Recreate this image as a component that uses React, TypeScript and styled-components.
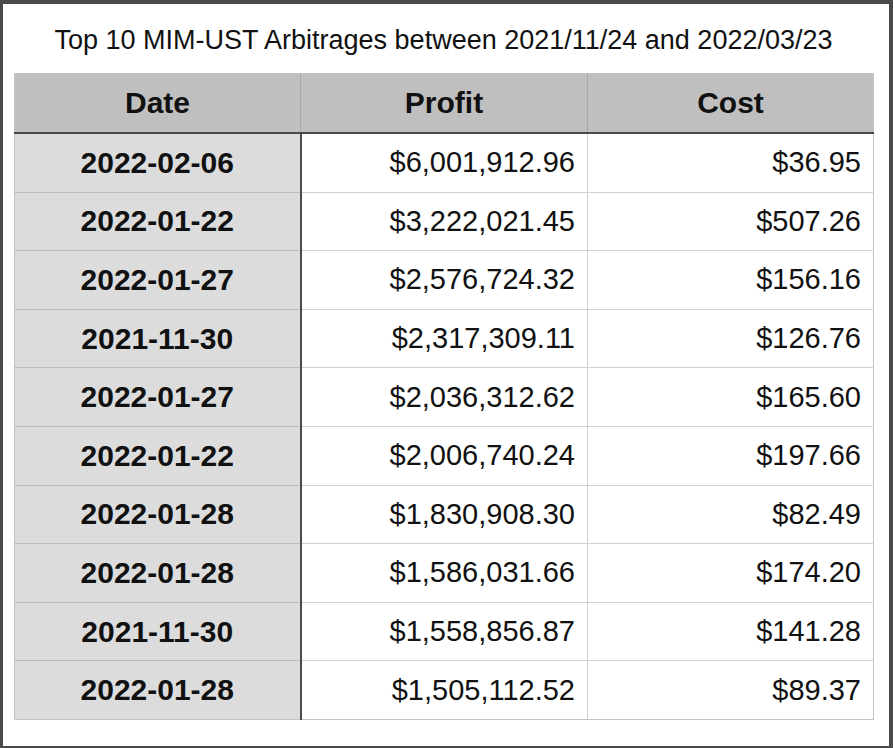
import React from "react";
import styled, { createGlobalStyle } from "styled-components";

const Global = createGlobalStyle`
  html, body { margin: 0; padding: 0; background: #4b4b4b; }
  body { font-family: "Liberation Sans", Arial, Helvetica, sans-serif; }
`;

const Card = styled.div`
  margin: 4px 4px 0 3px;
  height: 742px;
  background: #ffffff;
  display: flex;
  flex-direction: column;
  box-sizing: border-box;
  padding: 0 16px 0 11px;
`;

const Title = styled.h1`
  margin: 0;
  height: 69px;
  padding-top: 3px;
  box-sizing: border-box;
  display: flex;
  align-items: center;
  justify-content: center;
  font-size: 27px;
  font-weight: 400;
  color: #111;
  white-space: nowrap;
`;

const Table = styled.table`
  width: 859px;
  border-collapse: collapse;
  table-layout: fixed;
  border: 1px solid #c4c4c4;
`;

const HeadCell = styled.th`
  height: 58px;
  background: #bfbfbf;
  font-size: 30px;
  font-weight: 700;
  color: #111;
  text-align: center;
  border-left: 1px solid #a9a9a9;
  border-bottom: 2px solid #4a4a4a;
  padding: 0;
  &:first-child { border-left: none; }
`;

const DateCell = styled.td`
  height: 57.6px;
  background: #dcdcdc;
  font-size: 30px;
  font-weight: 700;
  color: #111;
  text-align: center;
  border-right: 2px solid #4a4a4a;
  border-top: 1px solid #bdbdbd;
  padding: 0;
`;

const NumCell = styled.td`
  font-size: 29px;
  font-weight: 400;
  color: #111;
  text-align: right;
  padding: 0 12px 0 0;
  border-top: 1px solid #cfcfcf;
  border-left: 1px solid #cfcfcf;
  white-space: nowrap;
`;

const rows = [
  ["2022-02-06", "$6,001,912.96", "$36.95"],
  ["2022-01-22", "$3,222,021.45", "$507.26"],
  ["2022-01-27", "$2,576,724.32", "$156.16"],
  ["2021-11-30", "$2,317,309.11", "$126.76"],
  ["2022-01-27", "$2,036,312.62", "$165.60"],
  ["2022-01-22", "$2,006,740.24", "$197.66"],
  ["2022-01-28", "$1,830,908.30", "$82.49"],
  ["2022-01-28", "$1,586,031.66", "$174.20"],
  ["2021-11-30", "$1,558,856.87", "$141.28"],
  ["2022-01-28", "$1,505,112.52", "$89.37"],
];

export default function App() {
  return (
    <>
      <Global />
      <Card>
        <Title>Top 10 MIM-UST Arbitrages between 2021/11/24 and 2022/03/23</Title>
        <Table>
          <colgroup>
            <col style={{ width: 286 }} />
            <col style={{ width: 287 }} />
            <col style={{ width: 286 }} />
          </colgroup>
          <thead>
            <tr>
              <HeadCell>Date</HeadCell>
              <HeadCell>Profit</HeadCell>
              <HeadCell>Cost</HeadCell>
            </tr>
          </thead>
          <tbody>
            {rows.map((r, i) => (
              <tr key={i}>
                <DateCell>{r[0]}</DateCell>
                <NumCell>{r[1]}</NumCell>
                <NumCell>{r[2]}</NumCell>
              </tr>
            ))}
          </tbody>
        </Table>
      </Card>
    </>
  );
}
